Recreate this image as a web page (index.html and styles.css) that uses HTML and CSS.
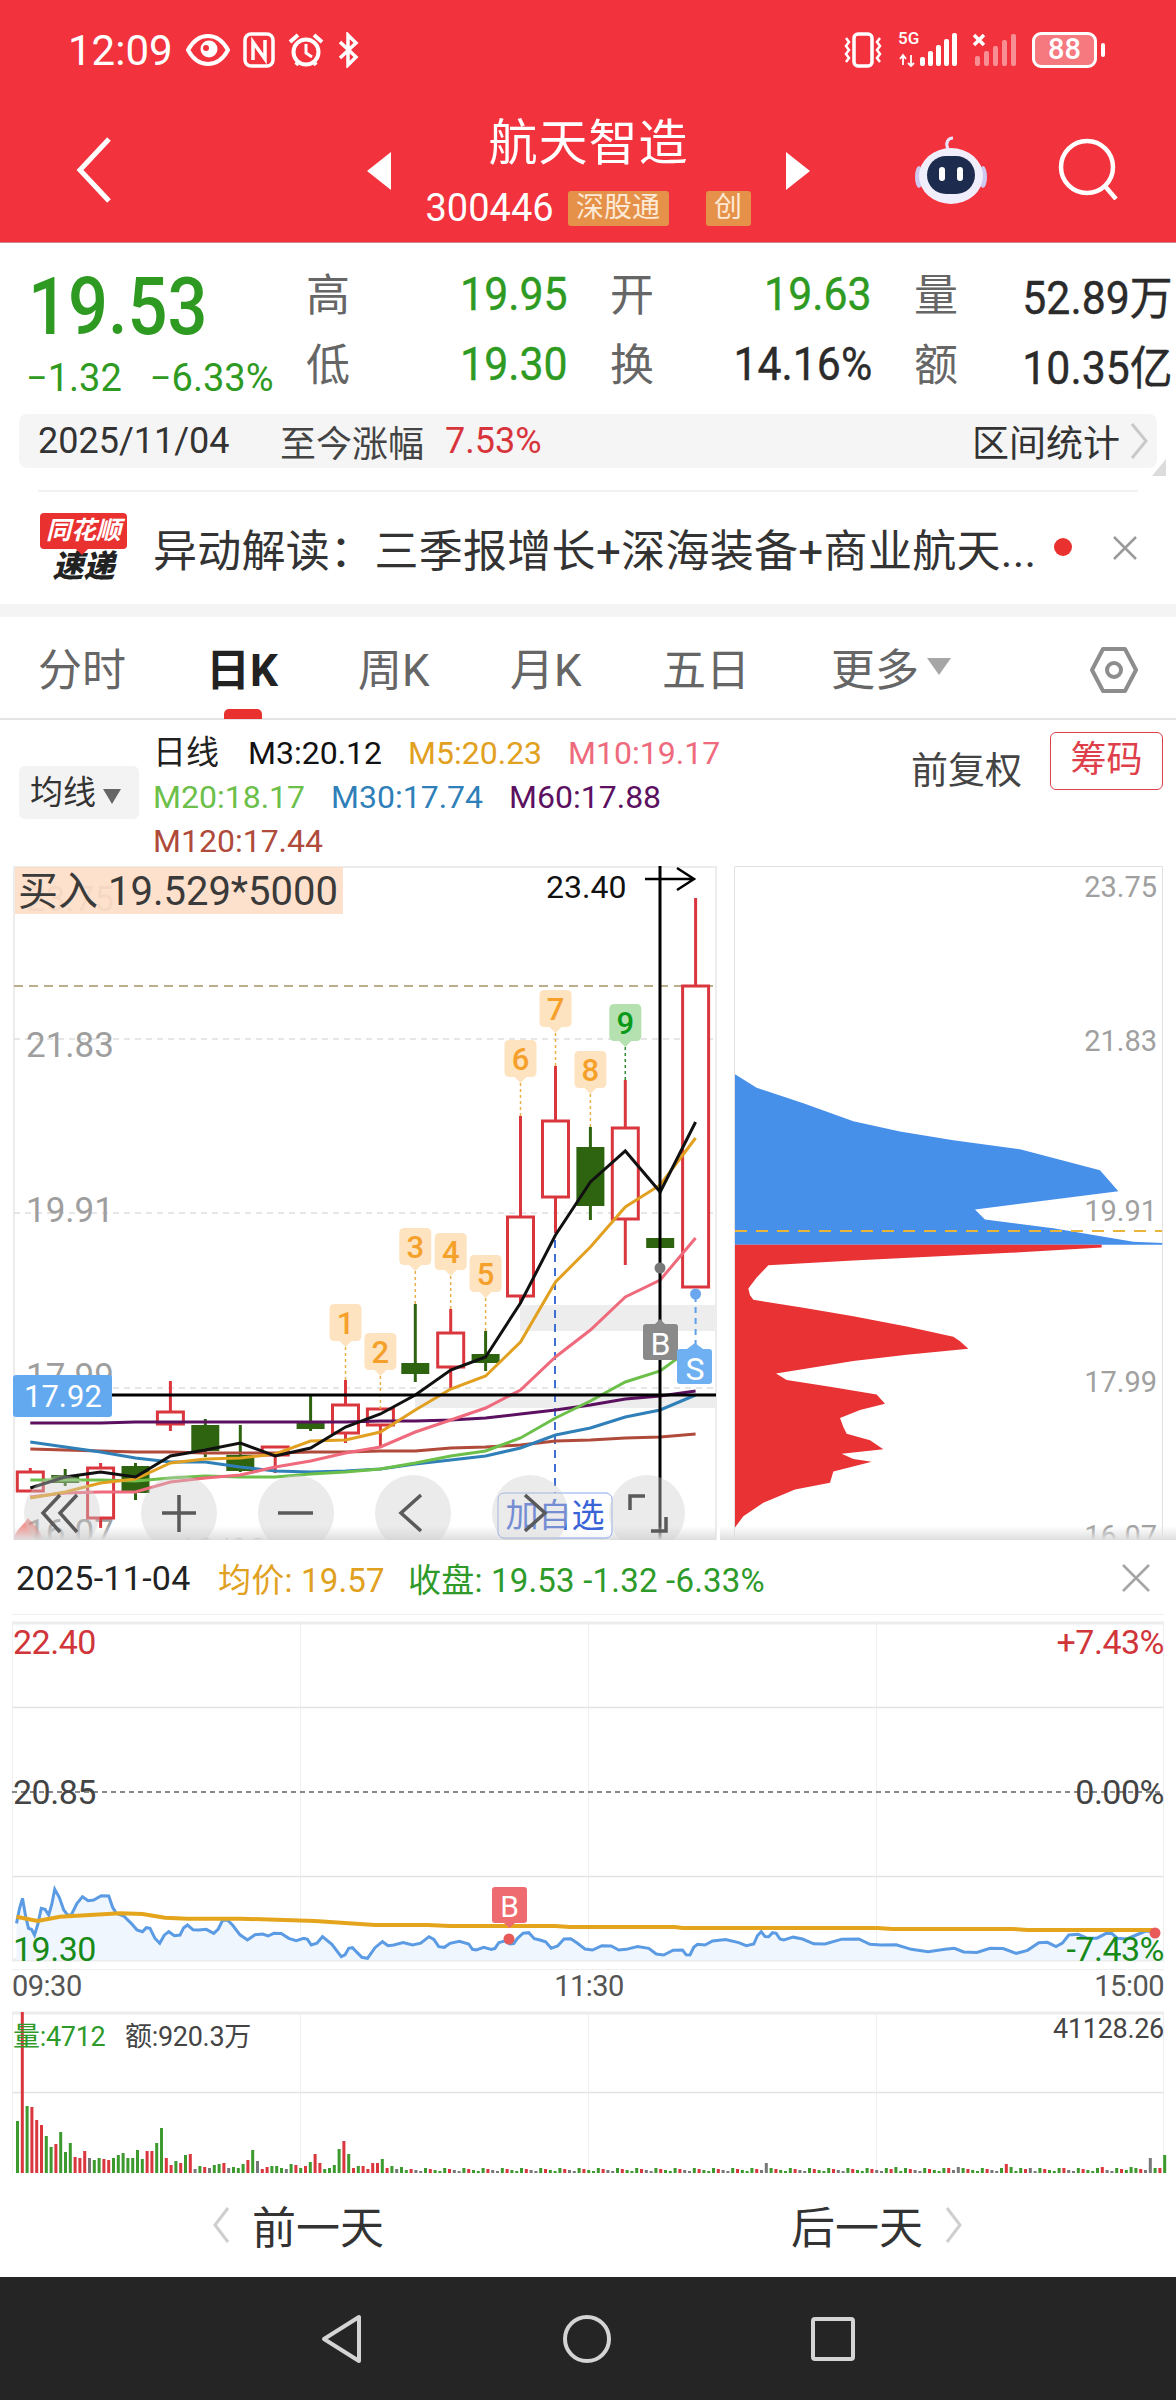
FILE: index.html
```html
<!DOCTYPE html>
<html lang="zh-CN">
<head>
    <meta charset="UTF-8">
    <meta name="viewport" content="width=device-width, initial-scale=1.0">
    <title>航天智造 300446</title>
    <link rel="stylesheet" href="styles.css">
</head>
<body>
    <header class="topBar">
        <div class="status">
            <span class="clock">12:09</span>
            <svg class="stIcon" width="44" height="34" viewBox="0 0 44 34"><path d="M2 17C8 6 15 3 22 3s14 3 20 14c-6 11-13 14-20 14S8 28 2 17z" fill="none" stroke="#fff" stroke-width="4"/><circle cx="23" cy="16" r="8.5" fill="#fff"/><circle cx="20" cy="15" r="3" fill="#f2323c"/></svg>
            <svg class="stIcon" width="32" height="36" viewBox="0 0 32 36"><rect x="2" y="2" width="28" height="32" rx="6" fill="none" stroke="#fff" stroke-width="3.5"/><path d="M10 28V10l12 17V8" fill="none" stroke="#fff" stroke-width="3.5"/></svg>
            <svg class="stIcon" width="36" height="36" viewBox="0 0 36 36"><circle cx="18" cy="20" r="12.5" fill="none" stroke="#fff" stroke-width="4"/><path d="M18 12v9l6 4" fill="none" stroke="#fff" stroke-width="3"/><path d="M2 10l8-7M34 10l-8-7M8 33l3-4M28 33l-3-4" stroke="#fff" stroke-width="4"/></svg>
            <svg class="stIcon" width="22" height="36" viewBox="0 0 22 36"><path d="M3 10l16 15-8 8V3l8 8L3 26" fill="none" stroke="#fff" stroke-width="3.5"/></svg>
            <div class="stRight">
                <svg width="44" height="36" viewBox="0 0 44 36"><rect x="13" y="2" width="18" height="32" rx="4" fill="none" stroke="#fff" stroke-width="3.5"/><path d="M5 6l3 4-3 4 3 4-3 4 3 4-3 4M39 6l-3 4 3 4-3 4 3 4-3 4 3 4" fill="none" stroke="#fff" stroke-width="2.5"/></svg>
                <div class="net">
                    <span class="fiveG">5G</span>
                    <svg width="62" height="34" viewBox="0 0 62 34"><path d="M2 26l3-4 3 4M5 22v10M10 30l3 3 3-3M13 22v10" fill="none" stroke="#fff" stroke-width="1.8"/><g fill="#fff"><rect x="22" y="24" width="5" height="9" rx="2"/><rect x="30" y="18" width="5" height="15" rx="2"/><rect x="38" y="12" width="5" height="21" rx="2"/><rect x="46" y="6" width="5" height="27" rx="2"/><rect x="54" y="0" width="5" height="33" rx="2"/></g></svg>
                </div>
                <svg width="46" height="36" viewBox="0 0 46 36"><path d="M1 3l10 10M11 3L1 13" stroke="#fff" stroke-width="3.5"/><g fill="#fff" opacity=".45"><rect x="2" y="24" width="5" height="10" rx="2"/><rect x="11" y="19" width="5" height="15" rx="2"/><rect x="20" y="14" width="5" height="20" rx="2"/><rect x="29" y="8" width="5" height="26" rx="2"/><rect x="38" y="2" width="5" height="32" rx="2"/></g></svg>
                <div class="battery"><span>88</span></div>
            </div>
        </div>
        <div class="stockHead">
            <div class="headLeft">
                <svg width="36" height="66" viewBox="0 0 36 66"><path d="M33 2L4 33l29 31" fill="none" stroke="#fff" stroke-width="5"/></svg>
            </div>
            <div class="stockMid">
                <svg width="24" height="38" viewBox="0 0 24 38"><path d="M24 0v38L0 19z" fill="#fff"/></svg>
                <div class="stockName">
                    <div class="name">航天智造</div>
                    <div class="codeRow">
                        <span class="code">300446</span>
                        <span class="tag tagWide">深股通</span>
                        <span class="tag">创</span>
                    </div>
                </div>
                <svg width="24" height="38" viewBox="0 0 24 38"><path d="M0 0v38l24-19z" fill="#fff"/></svg>
            </div>
            <div class="headRight">
                <svg width="74" height="70" viewBox="0 0 74 70"><path d="M34 14c-3-6 0-11 5-11" fill="none" stroke="#e9e4fa" stroke-width="3"/><ellipse cx="5" cy="42" rx="4" ry="11" fill="#cfc8ef"/><ellipse cx="69" cy="42" rx="4" ry="11" fill="#cfc8ef"/><ellipse cx="37" cy="41" rx="32" ry="28" fill="#f1eefc"/><rect x="13" y="21" width="48" height="38" rx="19" fill="#1d2b4f"/><rect x="25" y="32" width="6" height="14" rx="3" fill="#fff"/><rect x="43" y="32" width="6" height="14" rx="3" fill="#fff"/></svg>
                <svg class="searchIcon" width="62" height="62" viewBox="0 0 62 62"><circle cx="29" cy="29" r="26" fill="none" stroke="#fff" stroke-width="4.5"/><path d="M46 47l12 14" stroke="#fff" stroke-width="4.5"/></svg>
            </div>
        </div>
    </header>

    <section class="quote">
        <div class="priceBox">
            <div class="price">19.53</div>
            <div class="change"><span>−1.32</span><span>−6.33%</span></div>
        </div>
        <div class="stats">
            <div class="stat"><label>高</label><b class="fall">19.95</b></div>
            <div class="stat"><label>开</label><b class="fall">19.63</b></div>
            <div class="stat"><label>量</label><b>52.89万</b></div>
            <div class="stat"><label>低</label><b class="fall">19.30</b></div>
            <div class="stat"><label>换</label><b>14.16%</b></div>
            <div class="stat"><label>额</label><b>10.35亿</b></div>
        </div>
    </section>

    <div class="rangeBar">
        <span class="rangeDate">2025/11/04</span>
        <span class="rangeLabel">至今涨幅</span>
        <span class="rangeValue">7.53%</span>
        <span class="rangeLink">区间统计</span>
        <svg width="20" height="38" viewBox="0 0 20 38"><path d="M3 2l14 17L3 36" fill="none" stroke="#c9c9c9" stroke-width="3"/></svg>
    </div>

    <div class="news">
        <div class="newsLogo">
            <div class="bubble">同花顺</div>
            <div class="express">速递</div>
        </div>
        <div class="newsText">异动解读：三季报增长+深海装备+商业航天...</div>
        <i class="redDot"></i>
        <svg width="26" height="26" viewBox="0 0 26 26"><path d="M2 2l22 22M24 2L2 24" stroke="#9a9a9a" stroke-width="2.5"/></svg>
    </div>
    <div class="band"></div>

    <nav class="tabs">
        <span class="tab tabFirst">分时</span>
        <span class="tab active">日K</span>
        <span class="tab">周K</span>
        <span class="tab">月K</span>
        <span class="tab tabFive">五日</span>
        <span class="tab tabMore">更多<i class="arrow arrowBig"></i></span>
        <svg class="hexIcon" width="50" height="50" viewBox="0 0 50 50"><path d="M14 4h22l11 21-11 21H14L3 25z" fill="none" stroke="#8d8d8d" stroke-width="4" stroke-linejoin="round"/><circle cx="25" cy="25" r="7" fill="none" stroke="#8d8d8d" stroke-width="4"/></svg>
    </nav>

    <div class="maBar">
        <div class="maPick">均线<i class="arrow"></i></div>
        <div class="maList">
            <div class="maRow"><span class="c-day">日线</span><span class="c-m3">M3:20.12</span><span class="c-m5">M5:20.23</span><span class="c-m10">M10:19.17</span></div>
            <div class="maRow"><span class="c-m20">M20:18.17</span><span class="c-m30">M30:17.74</span><span class="c-m60">M60:17.88</span></div>
            <div class="maRow"><span class="c-m120">M120:17.44</span></div>
        </div>
        <span class="adjust">前复权</span>
        <span class="chipBtn">筹码</span>
    </div>

    <div class="charts">
        <svg id="kChart" width="712" height="674" viewBox="8 866 712 674">
            <defs>
                <linearGradient id="fade" x1="0" y1="0" x2="0" y2="1"><stop offset="0" stop-color="#e0e0e0" stop-opacity="0"/><stop offset="1" stop-color="#dedede"/></linearGradient>
            </defs>
            <path d="M14 1540V867H716V1540" fill="none" stroke="#ececec" stroke-width="2"/>
            <path class="gridDash" d="M14 1039H716M14 1213H716M14 1388H716"/>
            <rect class="zone" x="520" y="1305" width="196" height="26"/>
            <rect class="zone" x="415" y="1393" width="301" height="15"/>
            <text class="axis" x="26" y="911" opacity=".6">23.75</text>
            <text class="axis" x="26" y="1057">21.83</text>
            <text class="axis" x="26" y="1222">19.91</text>
            <text class="axis" x="26" y="1388">17.99</text>
            <text class="axis" x="26" y="1544">16.07</text>
            <path d="M14 986H716" stroke="#bcae8a" stroke-width="2" stroke-dasharray="9 6"/>
            <g id="candles"></g>
            <g id="leaders"></g>
            <path d="M555 1240V1493" stroke="#3f6fd2" stroke-width="2" stroke-dasharray="8 6"/>
            <g id="maLines"></g>
            <path d="M112 1395H716" stroke="#000" stroke-width="3"/>
            <path d="M660 866V1540" stroke="#000" stroke-width="3"/>
            <path d="M645 879H692M677 868l17 11-17 11" fill="none" stroke="#000" stroke-width="2.5"/>
            <text class="topPrice" x="546" y="898">23.40</text>
            <rect x="15" y="867" width="328" height="47" fill="#fedcc3" opacity=".85"/>
            <text class="buyNote" x="18" y="905">买入 19.529*5000</text>
            <rect x="13" y="1375" width="99" height="42" rx="3" fill="#62a9ef"/>
            <text class="lastPrice" x="24" y="1407">17.92</text>
            <g id="pins"></g>
            <circle cx="660" cy="1268" r="5.5" fill="#777"/>
            <path d="M695.6 1296V1345" stroke="#5d9fe8" stroke-width="2" stroke-dasharray="6 5"/>
            <circle cx="695.6" cy="1294" r="5.5" fill="#6aa7ee"/>
            <path class="flagGrey" d="M646 1324h9l5-5 5 5h10a3 3 0 0 1 3 3v30a3 3 0 0 1-3 3h-29a3 3 0 0 1-3-3v-30a3 3 0 0 1 3-3z"/>
            <text class="flagText" x="660.5" y="1355">B</text>
            <path class="flagBlue" d="M680 1349h7l8-6 8 6h6a3 3 0 0 1 3 3v29a3 3 0 0 1-3 3h-29a3 3 0 0 1-3-3v-29a3 3 0 0 1 3-3z"/>
            <text class="flagText" x="695" y="1380">S</text>
            <path d="M28 1518c5 6 14 13 14 22H14c0-9 9-14 14-22z" fill="#e8443c" opacity=".55"/>
            <text class="cutOff" x="177" y="1562">10/02</text>
            <rect x="14" y="1526" width="702" height="14" fill="url(#fade)"/>
            <rect class="addBtn" x="498" y="1493" width="114" height="45" rx="6"/>
            <text class="addText" x="555" y="1527">加自选</text>
            <g class="roundBtns">
                <circle cx="62" cy="1513" r="38"/>
                <circle cx="179" cy="1513" r="38"/>
                <circle cx="296" cy="1513" r="38"/>
                <circle cx="413" cy="1513" r="38"/>
                <circle cx="530" cy="1513" r="38"/>
                <circle cx="647" cy="1513" r="38"/>
            </g>
            <g class="btnIcons">
                <path d="M60 1495l-17 18 17 19M77 1495l-17 18 17 19"/>
                <path d="M162 1513h34M179 1495v37"/>
                <path d="M278 1513h35"/>
                <path d="M421 1495l-20 18 20 18"/>
                <path d="M525 1495l20 18-20 18"/>
                <path d="M645 1496h-15v14M651 1531h15v-14"/>
            </g>
        </svg>
        <svg id="chipChart" width="456" height="674" viewBox="720 866 456 674">
            <defs>
                <linearGradient id="fadeRight" x1="0" y1="0" x2="0" y2="1"><stop offset="0" stop-color="#e0e0e0" stop-opacity="0"/><stop offset="1" stop-color="#dedede"/></linearGradient>
            </defs>
            <path d="M734.500 1540V866.500H1162.500V1540" fill="none" stroke="#e2e2e2"/>
            <polygon id="chipBlue" fill="#4790ea"/>
            <polygon id="chipRed" fill="#e83234"/>
            <path d="M735 1231H1162" stroke="#e8b53a" stroke-width="2" stroke-dasharray="12 9"/>
            <text class="axisRight" x="1157" y="897">23.75</text>
            <text class="axisRight" x="1157" y="1051">21.83</text>
            <text class="axisRight" x="1157" y="1221">19.91</text>
            <text class="axisRight" x="1157" y="1392">17.99</text>
            <text class="axisRight" x="1157" y="1546">16.07</text>
            <rect x="720" y="1526" width="456" height="14" fill="url(#fadeRight)"/>
        </svg>
    </div>

    <section class="dayPanel">
        <div class="dayHead">
            <span class="dayDate">2025-11-04</span>
            <span class="dayAvg">均价: 19.57</span>
            <span class="dayClose">收盘: 19.53 -1.32 -6.33%</span>
            <svg width="32" height="30" viewBox="0 0 32 30"><path d="M3 2l26 26M29 2L3 28" stroke="#a5a5a5" stroke-width="2.5"/></svg>
        </div>
        <svg id="dayChart" width="1176" height="573" viewBox="0 1600 1176 573">
            <path class="gridSoft" d="M12 1614.500H1164M12 1969.500H1164"/>
            <path class="gridThick" d="M12 1623H1164M12 1960H1164M12 2013H1164"/>
            <path class="gridLine" d="M12 1707.500H1164M12 1876.500H1164M12 2092.500H1164"/>
            <path class="gridSoft" d="M12.500 1623V1960M300.500 1623V1960M588.500 1623V1960M876.500 1623V1960M1163.500 1623V1960M12.500 2013V2173M300.500 2013V2173M588.500 2013V2173M876.500 2013V2173M1163.500 2013V2173"/>
            <path d="M12 1792H1164" stroke="#888" stroke-width="2" stroke-dasharray="5 4"/>
            <polygon id="priceFill" fill="#f0f6fe"/>
            <polyline id="priceLine" fill="none" stroke="#5b9be3" stroke-width="3"/>
            <polyline id="avgLine" fill="none" stroke="#e4a51d" stroke-width="4"/>
            <text class="dayAxis up" x="13" y="1654">22.40</text>
            <text class="dayAxis up end" x="1164" y="1654">+7.43%</text>
            <text class="dayAxis flat" x="13" y="1804">20.85</text>
            <text class="dayAxis flat end" x="1164" y="1804">0.00%</text>
            <text class="dayAxis down" x="13" y="1961">19.30</text>
            <text class="dayAxis down end" x="1164" y="1961">-7.43%</text>
            <text class="timeAxis" x="12" y="1996">09:30</text>
            <text class="timeAxis mid" x="589" y="1996">11:30</text>
            <text class="timeAxis end" x="1164" y="1996">15:00</text>
            <path d="M495 1887h29a3 3 0 0 1 3 3v30a3 3 0 0 1-3 3h-9l-5.500 5-5.500-5h-9a3 3 0 0 1-3-3v-30a3 3 0 0 1 3-3z" fill="#ee6b6f"/>
            <text class="flagSmall" x="509.500" y="1917">B</text>
            <circle cx="509" cy="1939" r="5.500" fill="#e85a5a"/>
            <circle cx="1155" cy="1933" r="5.500" fill="#e85a5a"/>
            <g id="volBars"></g>
            <text class="volText green" x="13" y="2046">量:4712</text>
            <text class="volText grey" x="125" y="2046">额:920.3万</text>
            <text class="volText grey end" x="1164" y="2038">41128.26</text>
        </svg>
    </section>

    <div class="pager">
        <div class="pageBtn">
            <svg width="18" height="36" viewBox="0 0 18 36"><path d="M16 1L3 18l13 17" fill="none" stroke="#cfcfcf" stroke-width="3"/></svg>
            <span>前一天</span>
        </div>
        <div class="pageBtn">
            <span>后一天</span>
            <svg width="18" height="36" viewBox="0 0 18 36"><path d="M2 1l13 17L2 35" fill="none" stroke="#cfcfcf" stroke-width="3"/></svg>
        </div>
    </div>

    <footer class="navBar">
        <svg width="42" height="50" viewBox="0 0 42 50"><path d="M38 3v44L3 25z" fill="none" stroke="#d4d4d4" stroke-width="4" stroke-linejoin="round"/></svg>
        <svg width="48" height="48" viewBox="0 0 48 48"><circle cx="24" cy="24" r="22" fill="none" stroke="#d4d4d4" stroke-width="4"/></svg>
        <svg width="44" height="44" viewBox="0 0 44 44"><rect x="2" y="2" width="40" height="40" rx="2" fill="none" stroke="#d4d4d4" stroke-width="4"/></svg>
    </footer>

    <script src="script.js"></script>
</body>
</html>
```

FILE: styles.css
```css
*{
    padding: 0;
    margin: 0;
    box-sizing: border-box;
}
body{
    width: 1176px;
    height: 2400px;
    overflow: hidden;
    background: #fff;
    color: #222;
    font-family: Roboto, "Noto Sans CJK SC", sans-serif;
}
svg{
    display: block;
    flex: none;
}

/* red header */
.topBar{
    height: 243px;
    background: #f2323c;
    color: #fff;
    border-bottom: 1px solid #c9888c;
}
.status{
    padding: 30px 0 0 68px;
    display: flex;
    align-items: center;
    height: 70px;
}
.clock{
    font-size: 42px;
    width: 118px;
}
.stIcon{
    margin-right: 13px;
}
.stRight{
    margin-left: auto;
    display: flex;
    align-items: center;
    gap: 13px;
    padding-right: 79px;
}
.net{
    position: relative;
    width: 62px;
    height: 34px;
}
.fiveG{
    position: absolute;
    top: -5px;
    left: 0;
    font-size: 17px;
    font-weight: 500;
}
.battery{
    position: relative;
    width: 65px;
    height: 36px;
    border: 3px solid #fff;
    border-radius: 9px;
    background: rgba(255, 255, 255, 0.35);
    text-align: center;
    font-size: 29px;
    line-height: 29px;
    font-weight: 500;
}
.battery::after{
    content: "";
    position: absolute;
    right: -11px;
    top: 8px;
    width: 4px;
    height: 14px;
    border-radius: 2px;
    background: #fff;
}
.stockHead{
    display: grid;
    grid-template-columns: 367px 443px 1fr;
    height: 173px;
}
.headLeft{
    padding: 67px 0 0 76px;
}
.stockMid{
    display: flex;
    justify-content: space-between;
    padding-top: 82px;
}
.stockName{
    margin-top: -46px;
    text-align: center;
}
.name{
    font-size: 49px;
    line-height: 76px;
    letter-spacing: 1px;
}
.codeRow{
    display: flex;
    align-items: center;
    margin-top: 4px;
    width: 326px;
}
.code{
    font-size: 38px;
    width: 142px;
    text-align: left;
}
.tag{
    width: 45px;
    height: 35px;
    line-height: 33px;
    background: #e6914a;
    border-radius: 3px;
    font-size: 28px;
    text-align: center;
    color: #fde9d5;
}
.tagWide{
    width: 101px;
    margin-right: 37px;
}
.headRight{
    display: flex;
    gap: 70px;
    padding: 65px 0 0 104px;
}
.searchIcon{
    margin-top: 3px;
}

/* price block */
.quote{
    display: flex;
    height: 171px;
}
.priceBox{
    width: 306px;
    padding-left: 28px;
}
.price{
    font-size: 80px;
    font-weight: 500;
    line-height: 78px;
    margin-top: 25px;
    color: #2e9a22;
    transform: scaleX(0.88);
    transform-origin: left;
}
.change{
    display: flex;
    gap: 28px;
    margin-left: -2px;
    font-size: 38px;
    margin-top: 9px;
    line-height: 46px;
    color: #2e9a22;
}
.stats{
    display: grid;
    grid-template-columns: 262px 262px 259px;
    grid-auto-rows: 70px;
    column-gap: 42px;
    padding-top: 16px;
}
.stat{
    display: flex;
    justify-content: space-between;
    align-items: center;
}
.stat label{
    font-size: 44px;
    color: #666;
    margin-top: -4px;
}
.stat b{
    font-size: 46px;
    font-weight: 400;
    -webkit-text-stroke: 0.4px currentColor;
    color: #2b2b2b;
    transform: scaleX(0.93);
    transform-origin: right;
}
.stat .fall{
    color: #2e9a22;
}

.rangeBar{
    position: relative;
    display: flex;
    align-items: center;
    height: 54px;
    margin: 0 19px;
    padding: 0 8px 0 19px;
    background: #f5f5f5;
    border-radius: 8px;
    font-size: 36px;
}
.rangeBar::after{
    content: "";
    position: absolute;
    right: -9px;
    bottom: -8px;
    border-left: 14px solid transparent;
    border-bottom: 17px solid #dcdcdc;
}
.rangeDate{
    width: 242px;
    color: #333;
}
.rangeLabel{
    color: #444;
    margin-right: 21px;
}
.rangeValue{
    color: #d8343c;
}
.rangeLink{
    margin-left: auto;
    color: #333;
    margin-right: 9px;
    font-size: 37px;
}

/* news strip */
.news{
    display: flex;
    align-items: center;
    height: 114px;
    margin: 22px 38px 0;
    border-top: 2px solid #f1f1f1;
}
.newsLogo{
    width: 115px;
    padding-left: 2px;
    padding-top: 2px;
}
.bubble{
    position: relative;
    width: 87px;
    height: 36px;
    background: #e9312f;
    color: #fff;
    border-radius: 4px;
    font-size: 25px;
    line-height: 36px;
    font-weight: 700;
    font-style: italic;
    text-align: center;
}
.bubble::after{
    content: "";
    position: absolute;
    left: 36px;
    bottom: -6px;
    border: 6px solid transparent;
    border-bottom: 0;
    border-top-color: #e9312f;
}
.express{
    width: 87px;
    font-size: 31px;
    line-height: 36px;
    font-weight: 900;
    font-style: italic;
    text-align: center;
    color: #222;
}
.newsText{
    font-size: 44px;
    letter-spacing: 0.3px;
    color: #333;
    white-space: nowrap;
    width: 902px;
}
.redDot{
    width: 18px;
    height: 18px;
    border-radius: 50%;
    background: #e9312f;
    margin-top: -2px;
}
.news svg{
    margin-left: 40px;
}
.band{
    height: 13px;
    background: #f4f4f4;
}

/* period tabs */
.tabs{
    position: relative;
    display: flex;
    align-items: center;
    height: 103px;
    padding: 0 0 2px 38px;
    border-bottom: 2px solid #e4e4e4;
    font-size: 44px;
    color: #666;
}
.tab{
    position: relative;
    width: 152px;
}
.tabFirst{
    width: 168px;
}
.tabFive{
    width: 169px;
}
.tabMore{
    display: flex;
    align-items: center;
}
.tab.active{
    color: #222;
    font-weight: 700;
}
.tab.active::after{
    content: "";
    position: absolute;
    left: 18px;
    bottom: -20px;
    width: 38px;
    height: 10px;
    border-radius: 5px 5px 0 0;
    background: #e9312f;
}
.arrow{
    display: inline-block;
    width: 0;
    height: 0;
    border: 9px solid transparent;
    border-bottom: 0;
    border-top: 15px solid #666;
    margin-left: 7px;
}
.arrowBig{
    border-width: 17px 12px 0;
    border-top-color: #a6a6a6;
    margin-left: 8px;
}
.hexIcon{
    position: absolute;
    left: 1089px;
    top: 28px;
}

/* moving average legend */
.maBar{
    position: relative;
    display: flex;
    height: 146px;
    padding: 11px 13px 0 19px;
}
.maPick{
    width: 120px;
    height: 53px;
    margin-top: 35px;
    padding-left: 11px;
    background: #f3f3f3;
    border-radius: 6px;
    font-size: 33px;
    line-height: 53px;
    color: #333;
}
.maList{
    margin-left: 14px;
    width: 731px;
}
.maRow{
    display: flex;
    gap: 26px;
    height: 44px;
    line-height: 44px;
    font-size: 32px;
}
.c-day{ color: #222; font-size: 33px; margin-right: 3px; }
.c-m3{ color: #111; }
.c-m5{ color: #e2a021; }
.c-m10{ color: #ee6a7c; }
.c-m20{ color: #6cc04a; }
.c-m30{ color: #2f7fb8; }
.c-m60{ color: #5c1060; }
.c-m120{ color: #b04a3a; }
.adjust{
    margin-left: 27px;
    margin-top: 17px;
    font-size: 37px;
    line-height: 48px;
    color: #444;
}
.chipBtn{
    width: 113px;
    height: 58px;
    margin-left: 28px;
    margin-top: 1px;
    border: 1px solid #de3f4a;
    border-radius: 6px;
    font-size: 36px;
    line-height: 54px;
    text-align: center;
    color: #de3f4a;
}

/* daily K and chip distribution */
.charts{
    display: grid;
    grid-template-columns: 712px 456px;
    padding-left: 8px;
    height: 674px;
}
#kChart text, #chipChart text, #dayChart text{
    font-family: Roboto, "Noto Sans CJK SC", sans-serif;
}
.gridDash{
    fill: none;
    stroke: #dedede;
    stroke-width: 1.5;
    stroke-dasharray: 6 5;
}
.zone{
    fill: #ededed;
}
.axis{
    font-size: 35px;
    fill: #9e9e9e;
}
.axisRight{
    font-size: 29px;
    fill: #a0a0a0;
    text-anchor: end;
}
.topPrice{
    font-size: 32px;
    fill: #111;
}
.buyNote{
    font-size: 40px;
    fill: #3a3a3a;
}
.lastPrice{
    font-size: 31px;
    fill: #fff;
}
.flagGrey{
    fill: #8a8a8a;
}
.flagBlue{
    fill: #6fb0f2;
}
.flagText{
    font-size: 32px;
    fill: #fff;
    text-anchor: middle;
}
.cutOff{
    font-size: 34px;
    fill: #333;
}
.pinBody{
    fill: #fee3c0;
}
.pinNine{
    fill: #b5e0b0;
}
.pinText{
    font-size: 31px;
    font-weight: 500;
    text-anchor: middle;
    fill: #f5a02a;
}
.pinNineText{
    fill: #0a9a1a;
}
.addBtn{
    fill: rgba(255, 255, 255, 0.7);
    stroke: #8aa6ec;
}
.addText{
    font-size: 33px;
    text-anchor: middle;
    fill: #3a63d8;
}
.roundBtns circle{
    fill: rgba(205, 205, 205, 0.4);
}
.btnIcons path{
    fill: none;
    stroke: #5a5a5a;
    stroke-width: 3.5;
}

/* intraday panel */
.dayPanel{
    height: 633px;
}
.dayHead{
    display: flex;
    align-items: center;
    height: 60px;
    padding: 16px 24px 0 16px;
    font-size: 33px;
    letter-spacing: 0.2px;
}
.dayDate{
    width: 202px;
    font-size: 34px;
    letter-spacing: 0.3px;
    color: #222;
}
.dayAvg{
    width: 190px;
    color: #e0a020;
}
.dayClose{
    color: #2e9a2a;
}
.dayHead svg{
    margin-left: auto;
}
.gridSoft, .gridLine, .gridThick{
    fill: none;
}
.gridSoft{
    stroke: #efefef;
}
.gridLine{
    stroke: #e2e2e2;
    stroke-width: 1.5;
}
.gridThick{
    stroke: #ececec;
    stroke-width: 3;
}
.dayAxis{
    font-size: 34px;
    letter-spacing: -0.5px;
}
.up{ fill: #d0353a; }
.flat{ fill: #444; }
.down{ fill: #188a18; }
.end{
    text-anchor: end;
}
.mid{
    text-anchor: middle;
}
.timeAxis{
    font-size: 29px;
    letter-spacing: -0.5px;
    fill: #555;
}
.flagSmall{
    font-size: 30px;
    fill: #fff;
    text-anchor: middle;
}
.volText{
    font-size: 27px;
    letter-spacing: -0.3px;
}
.green{ fill: #2e9a2a; }
.grey{ fill: #444; }

.pager{
    display: grid;
    grid-template-columns: 1fr 1fr;
    height: 104px;
}
.pageBtn{
    display: flex;
    align-items: center;
    font-size: 44px;
    color: #333;
}
.pageBtn:first-child{
    padding-left: 212px;
    gap: 22px;
}
.pageBtn:last-child{
    padding-left: 203px;
    gap: 22px;
}
.navBar{
    display: flex;
    align-items: center;
    height: 123px;
    padding: 0 321px 0 321px;
    justify-content: space-between;
    background: #252525;
}
```

FILE: script.js
```js
const NS = "http://www.w3.org/2000/svg";

function add(parent, tag, attrs) {
    let el = document.createElementNS(NS, tag);
    for (let k in attrs) el.setAttribute(k, attrs[k]);
    parent.appendChild(el);
    return el;
}

const UP = "#d9363e";
const DOWN = "#2e6410";

// candle: x, up?, body top, body bottom, wick top, wick bottom
const candles = [
    [30.3, 1, 1472, 1491, 1468, 1491],
    [65.2, 0, 1476, 1482, 1469, 1486],
    [100.6, 1, 1468, 1518, 1463, 1528],
    [135.5, 0, 1467, 1492, 1463, 1500],
    [170.4, 1, 1412, 1424, 1381, 1431],
    [205.3, 0, 1426, 1450, 1419, 1457],
    [240.3, 0, 1456, 1470, 1425, 1472],
    [275.2, 1, 1447, 1455, 1447, 1473],
    [310.6, 0, 1423, 1428, 1396, 1431],
    [345.5, 1, 1405, 1433, 1380, 1443],
    [380.4, 1, 1409, 1425, 1409, 1447],
    [415.3, 0, 1364, 1373, 1304, 1382],
    [450.7, 1, 1333, 1367, 1309, 1390],
    [485.6, 0, 1355, 1362, 1331, 1371],
    [520.5, 1, 1217, 1296, 1116, 1304],
    [555.5, 1, 1121, 1197, 1066, 1233],
    [590.4, 0, 1148, 1205, 1127, 1220],
    [625.3, 1, 1128, 1219, 1080, 1265],
    [660.2, 0, 1239, 1247, 1239, 1247],
    [695.6, 1, 986, 1287, 898, 1287]
];

let candleBox = document.getElementById("candles");
candles.forEach(function (c) {
    let color = c[1] ? UP : DOWN;
    add(candleBox, "line", { x1: c[0], x2: c[0], y1: c[4], y2: c[5], stroke: color, "stroke-width": 3 });
    add(candleBox, "rect", {
        x: c[0] - 13, y: c[2], width: 26, height: c[3] - c[2],
        fill: c[1] ? "#fff" : color, stroke: color, "stroke-width": c[1] ? 3 : 2
    });
});

// moving averages, one y per candle
const maX = candles.map(c => c[0]);
const maLines = [
    ["#b04a3a", [1449, 1450, 1451, 1452, 1452, 1453, 1453, 1453, 1452, 1452, 1451, 1451, 1448, 1447, 1445, 1441, 1440, 1438, 1437, 1434]],
    ["#2f7fb8", [1442, 1447, 1452, 1458, 1462, 1462, 1467, 1471, 1472, 1471, 1469, 1464, 1460, 1456, 1448, 1435, 1428, 1417, 1410, 1395]],
    ["#5c1060", [1423, 1423, 1423, 1422, 1422, 1422, 1422, 1422, 1422, 1422, 1421, 1421, 1420, 1418, 1414, 1410, 1405, 1399, 1396, 1391]],
    ["#6cc04a", [1480, 1480, 1480, 1481, 1478, 1476, 1477, 1477, 1474, 1472, 1469, 1463, 1456, 1451, 1438, 1418, 1401, 1382, 1371, 1345]],
    ["#ee6a7c", [1497, 1493, 1492, 1492, 1482, 1478, 1475, 1467, 1461, 1453, 1447, 1432, 1420, 1408, 1390, 1357, 1330, 1297, 1280, 1238]],
    ["#e2a021", [1498, 1492, 1483, 1479, 1463, 1459, 1458, 1454, 1441, 1440, 1432, 1410, 1389, 1376, 1342, 1282, 1247, 1207, 1185, 1138]],
    ["#111", [1488, 1477, 1472, 1477, 1456, 1450, 1443, 1456, 1448, 1427, 1414, 1395, 1370, 1357, 1303, 1235, 1182, 1151, 1192, 1122]]
];
let maBox = document.getElementById("maLines");
maLines.forEach(function (m) {
    let pts = m[1].map((y, i) => maX[i] + "," + y).join(" ");
    add(maBox, "polyline", { points: pts, fill: "none", stroke: m[0], "stroke-width": 3 });
});

// numbered pins: label, x, top of pin, candle wick top
const pins = [
    ["1", 345.5, 1304, 1380], ["2", 380.4, 1333, 1409], ["3", 415.3, 1228, 1304],
    ["4", 450.7, 1233, 1309], ["5", 485.6, 1255, 1331], ["6", 520.5, 1040, 1116],
    ["7", 555.5, 990, 1066], ["8", 590.4, 1051, 1127], ["9", 625.3, 1004, 1080]
];
let pinBox = document.getElementById("pins");
let leaderBox = document.getElementById("leaders");
pins.forEach(function (p) {
    let nine = p[0] === "9";
    let x = p[1], t = p[2];
    add(leaderBox, "line", {
        x1: x, x2: x, y1: t + 43, y2: p[3],
        stroke: nine ? "#2e8a2e" : "#e9b04a", "stroke-width": 1.5, "stroke-dasharray": "3 3"
    });
    add(pinBox, "path", {
        class: nine ? "pinNine" : "pinBody",
        d: `M${x - 11} ${t}h22q5 0 5 5v27q0 5-5 5h-5l-6 6-6-6h-5q-5 0-5-5v-27q0-5 5-5z`
    });
    let txt = add(pinBox, "text", { class: nine ? "pinText pinNineText" : "pinText", x: x, y: t + 30 });
    txt.textContent = p[0];
});

// chip distribution outlines
function chipPoints(list) {
    return list.map(p => (720 + p[0] / 3) + "," + (860 + p[1] / 2.24)).join(" ");
}
document.getElementById("chipBlue").setAttribute("points", chipPoints([
    [45, 480], [110, 510], [250, 545], [400, 585], [540, 608], [700, 628], [900, 648], [1140, 695], [1195, 742],
    [765, 783], [795, 805], [1000, 825], [1240, 855], [1327, 858], [1327, 862], [45, 862]
]));
document.getElementById("chipRed").setAttribute("points", chipPoints([
    [45, 862], [1145, 862], [1145, 868], [870, 880], [400, 897], [145, 908], [110, 935], [85, 960], [90, 975], [100, 985],
    [250, 1003], [400, 1022], [560, 1045], [700, 1068], [720, 1078], [745, 1095], [560, 1108], [400, 1122], [168, 1150],
    [200, 1165], [330, 1180], [470, 1197], [495, 1218], [420, 1232], [360, 1250], [370, 1270], [380, 1285], [450, 1300],
    [490, 1320], [365, 1330], [400, 1342], [455, 1348], [340, 1370], [330, 1395], [225, 1410], [130, 1440], [70, 1470],
    [45, 1495], [45, 1525]
]));

// intraday lines, 1568 units across the page and 3 units per pixel down
function dayPoints(list) {
    return list.map(p => (p[0] * 0.75) + "," + (1540 + p[1] / 3)).join(" ");
}
// puts a small tick between every two points so the line reads as minute data
function roughen(list) {
    let out = [];
    list.forEach(function (p, i) {
        out.push(p);
        if (i < list.length - 1) {
            let n = list[i + 1];
            let mid = [(p[0] + n[0]) / 2, (p[1] + n[1]) / 2 + (i % 2 ? 7 : -7)];
            out.push(mid);
        }
    });
    return out;
}
const price = roughen([
    [22, 1150], [30, 1075], [38, 1165], [46, 1185], [55, 1105], [65, 1125], [73, 1048], [85, 1110], [95, 1125], [110, 1070],
    [125, 1080], [145, 1068], [155, 1120], [175, 1150], [190, 1175], [200, 1165], [213, 1210], [225, 1175], [240, 1185],
    [250, 1155], [265, 1170], [285, 1180], [297, 1140], [310, 1155], [330, 1200], [350, 1182], [365, 1180], [385, 1195],
    [405, 1195], [415, 1215], [430, 1190], [455, 1250], [465, 1225], [475, 1235], [490, 1255], [510, 1205], [525, 1215],
    [550, 1215], [572, 1190], [585, 1220], [600, 1210], [625, 1212], [635, 1230], [655, 1228], [665, 1208], [680, 1212],
    [690, 1195], [705, 1178], [720, 1200], [735, 1225], [752, 1197], [770, 1210], [790, 1230], [815, 1218], [835, 1228],
    [865, 1225], [885, 1245], [910, 1230], [920, 1245], [930, 1213], [950, 1203], [985, 1208], [1005, 1212], [1015, 1175],
    [1025, 1190], [1035, 1180], [1045, 1200], [1070, 1197], [1100, 1212], [1145, 1197], [1175, 1215], [1215, 1228],
    [1260, 1228], [1285, 1236], [1320, 1225], [1355, 1240], [1385, 1208], [1408, 1220], [1425, 1185], [1450, 1195],
    [1475, 1180], [1490, 1195], [1515, 1185], [1540, 1175]
]);
const avg = [
    [22, 1130], [50, 1143], [80, 1130], [120, 1125], [160, 1120], [190, 1122], [220, 1133], [250, 1136], [320, 1136],
    [420, 1143], [500, 1155], [570, 1155], [600, 1158], [740, 1158], [760, 1161], [900, 1161], [910, 1164], [1170, 1164],
    [1190, 1167], [1350, 1167], [1370, 1170], [1540, 1170]
];
document.getElementById("priceLine").setAttribute("points", dayPoints(price));
document.getElementById("avgLine").setAttribute("points", dayPoints(avg));
document.getElementById("priceFill").setAttribute("points", dayPoints([[22, 1260]].concat(price, [[1540, 1260]])));

// volume bars
const VOL_COLORS = { g: "#3c9a2e", r: "#d9363e", n: "#777" };
const volHead = [52, 161, 67, 66, 53, 48, 37, 26, 29, 41, 21, 30, 16, 15, 22, 15, 13, 15, 14, 13, 15, 18, 20, 15, 15, 23, 14, 22, 22, 30, 45,
    15, 8, 12, 10, 18, 19, 4, 7, 6, 5, 8, 9, 10, 5, 6, 5, 9, 13, 23, 12, 4, 6, 7, 7, 5, 4, 9, 8, 5, 7, 11, 19, 10, 4, 5, 8, 24, 32, 19, 5, 7, 7, 4, 10, 10, 14, 5, 7, 4, 6, 3];
const volHeadColor = "grgrrrggrgggrrrnggrrgggggggrrgg" + "rrgrgrngrnggrngggrgnrrgggngrgrgrrggggrgrgrrrrgrgn";
const spikes = { 156: 10, 183: 6, 194: 5, 196: 6, 211: 5, 226: 6, 206: 9, 207: 6, 218: 5, 232: 6, 238: 5 };
let volBox = document.getElementById("volBars");
for (let i = 0; i < 240; i++) {
    let h, color;
    if (i < volHead.length) {
        h = volHead[i];
        color = volHeadColor[i] || "g";
    } else {
        h = spikes[i] || 2 + (i * 7) % 4;
        color = "grgnrg"[(i * 5 + (i >> 2)) % 6];
    }
    if (i === 236) h = 15;
    if (i === 239) h = 18;
    add(volBox, "rect", {
        x: 16 + i * 4.8, y: 2173 - h, width: 3, height: h,
        fill: VOL_COLORS[color]
    });
}
```
